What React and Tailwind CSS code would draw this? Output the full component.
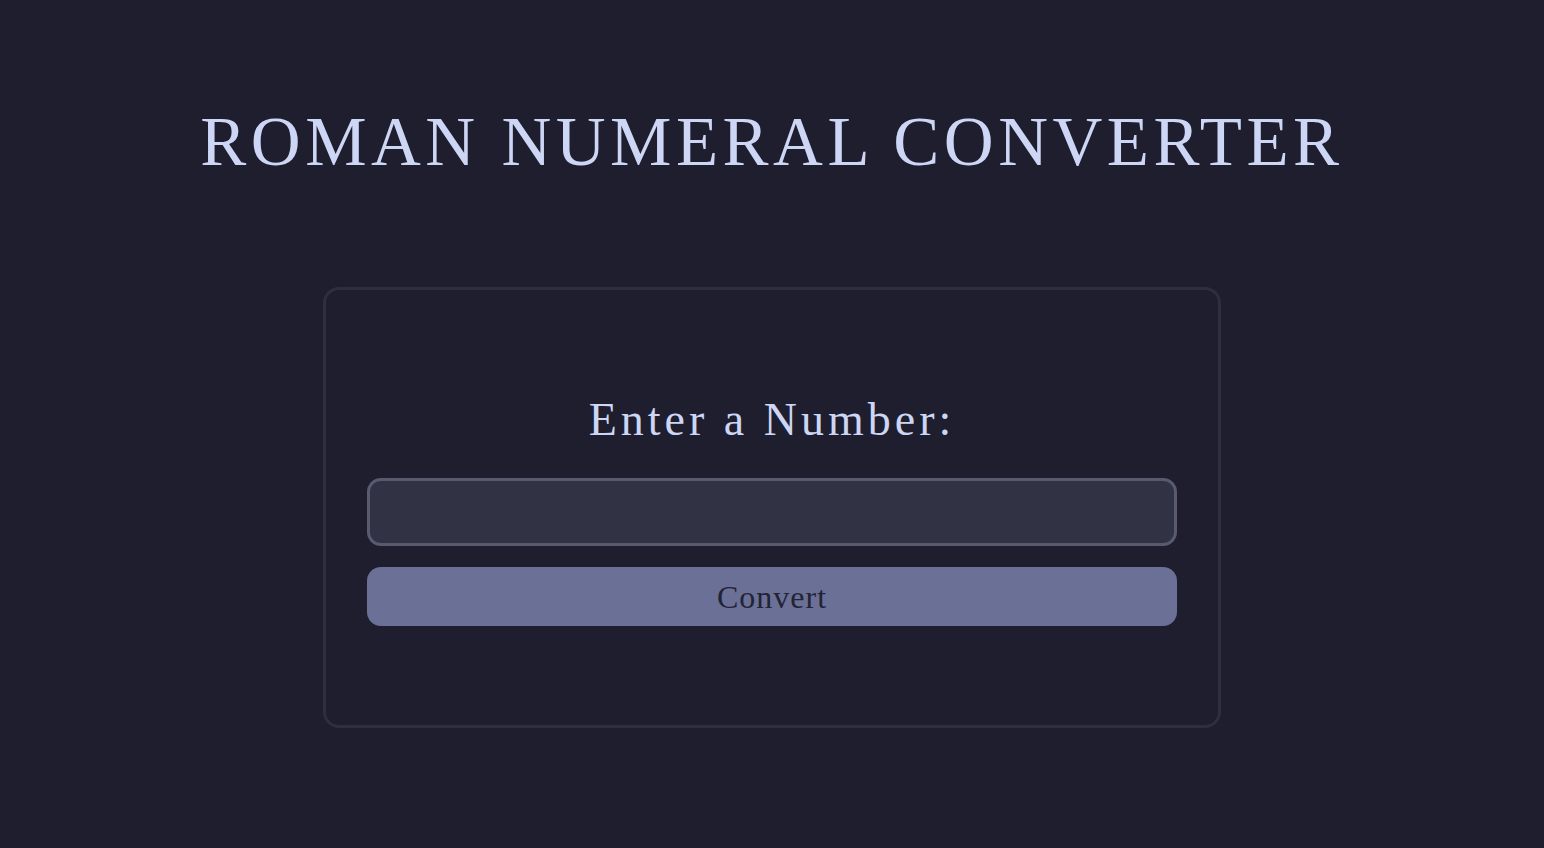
import React, { useState } from 'react';

const App = () => {
  const [value, setValue] = useState('');

  return (
    <div className="min-h-[848px] w-full bg-[#1e1e2e] flex flex-col items-center" style={{ fontFamily: '"Liberation Serif", "DejaVu Serif", serif' }}>
      <h1 className="mt-[100px] text-[69px] leading-[84px] tracking-[4.5px] text-[#cdd6f4] font-normal">ROMAN NUMERAL CONVERTER</h1>

      <div className="mt-[103px] w-[898px] h-[441px] border-[3px] border-[#2d2f40] rounded-[16px] flex flex-col items-center px-[41px] pt-[102px]">
        <label htmlFor="number" className="text-[46px] leading-[56px] tracking-[4px] text-[#cdd6f4]">Enter a Number:</label>
        <input
          id="number"
          type="number"
          value={value}
          onChange={(e) => setValue(e.target.value)}
          className="mt-[30px] w-full h-[68px] bg-[#313244] border-[3px] border-[#585b70] rounded-[14px] px-4 text-[28px] text-[#cdd6f4] outline-none"
        />
        <button className="mt-[21px] w-full h-[59px] bg-[#6b7096] rounded-[14px] text-[32px] leading-none tracking-[1px] text-[#232336]">
          Convert
        </button>
      </div>
    </div>
  );
};

export default App;
